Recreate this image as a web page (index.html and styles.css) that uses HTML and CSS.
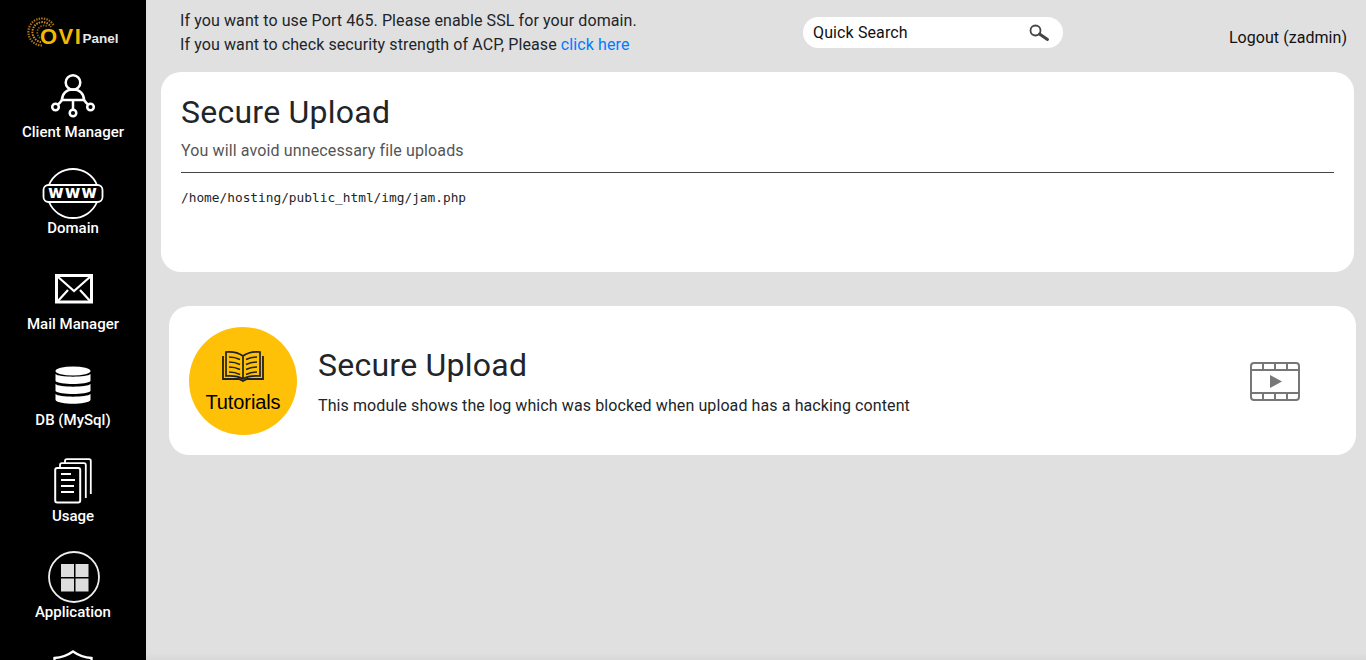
FILE: index.html
```html
<!DOCTYPE html>
<html lang="en">
<head>
<meta charset="utf-8">
<title>Secure Upload</title>
<link rel="stylesheet" href="styles.css">
</head>
<body>
<div class="app">
  <nav class="sidebar">
    <div class="logo">
      <svg class="logo-mark" width="30" height="30" viewBox="0 0 30 30" fill="none" stroke-dasharray="1.500 1.100">
        <path d="M15 28.500A13.500 13.500 0 1 1 27 9" stroke="#a86f16" stroke-width="2.200"/>
        <path d="M14 25A10 10 0 1 1 24 10" stroke="#c98a1c" stroke-width="2"/>
        <path d="M13 21A7 7 0 0 1 20 9" stroke="#7d5310" stroke-width="1.800"/>
      </svg>
      <span class="logo-ovi">OVI</span><span class="logo-panel">Panel</span>
    </div>
    <a class="nav-item">
      <svg class="nav-icon gap-0" width="48" height="48" viewBox="0 0 48 48" fill="none" stroke="#fff" stroke-width="2.500">
        <circle cx="24" cy="9.500" r="7.300"/>
        <path d="M13 27c0-6.500 4.500-10.500 11-10.500S35 20.500 35 27z"/>
        <path d="M24 27v9.500M13 27c-1.500 2-2.500 3.500-4 4.500M35 27c1.500 2 2.500 3.500 4 4.500"/>
        <circle cx="6.500" cy="34" r="3.300"/><circle cx="24" cy="40" r="3.300"/><circle cx="41.500" cy="34" r="3.300"/>
      </svg>
      <span>Client Manager</span>
    </a>
    <a class="nav-item">
      <svg class="nav-icon gap-over" width="62" height="54" viewBox="0 0 62 54" fill="none" stroke="#fff" stroke-width="1.800">
        <path d="M7 20A26 26 0 0 1 55 20M7 37A26 26 0 0 0 55 37"/>
        <rect x="1.500" y="20" width="59" height="17" rx="5"/>
        <text class="www" x="31" y="33" text-anchor="middle">www</text>
      </svg>
      <span>Domain</span>
    </a>
    <a class="nav-item">
      <svg class="nav-icon gap-mail shift" width="38" height="30" viewBox="0 0 38 30" fill="none" stroke="#fff" stroke-width="3">
        <rect x="1.500" y="1.500" width="35" height="26.500"/>
        <path d="M2 2l17 15L36 2M2 28l11-12M36 28L25 16" stroke-width="2.200"/>
      </svg>
      <span>Mail Manager</span>
    </a>
    <a class="nav-item">
      <svg class="nav-icon gap-db" width="36" height="38" viewBox="0 0 36 38" fill="#fff">
        <ellipse cx="18" cy="5" rx="17.500" ry="4.500"/>
        <path d="M.5 8c3 3.500 32 3.500 35 0v7c-3 4-32 4-35 0zM.5 18c3 3.500 32 3.500 35 0v7c-3 4-32 4-35 0zM.5 28c3 3.500 32 3.500 35 0v6c-3 5-32 5-35 0z"/>
      </svg>
      <span>DB (MySql)</span>
    </a>
    <a class="nav-item">
      <svg class="nav-icon gap-1" width="38" height="46" viewBox="0 0 38 46" fill="none" stroke="#fff" stroke-width="1.800">
        <path d="M11 5V3c0-1 .8-1.800 1.800-1.800H35c1 0 1.800.8 1.800 1.800v33"/>
        <path d="M6 9V7c0-1 .8-1.800 1.800-1.800H30c1 0 1.800.8 1.800 1.800v33"/>
        <rect x="1.200" y="10" width="25" height="34.500" rx="2" fill="#000" stroke-width="2"/>
        <path d="M7 16h10M7 22h14M7 28h13M7 34h13" stroke-width="1.800"/>
      </svg>
      <span>Usage</span>
    </a>
    <a class="nav-item">
      <svg class="nav-icon gap-over shift" width="52" height="52" viewBox="0 0 52 52">
        <circle cx="26" cy="26" r="25" fill="none" stroke="#eee" stroke-width="1.800"/>
        <rect x="13" y="13" width="13" height="13" fill="#ddd"/><rect x="27.500" y="13" width="13" height="13" fill="#ddd"/>
        <rect x="13" y="27.500" width="13" height="13" fill="#ddd"/><rect x="27.500" y="27.500" width="13" height="13" fill="#ddd"/>
      </svg>
      <span>Application</span>
    </a>
    <a class="nav-item">
      <svg class="nav-icon gap-shield" width="40" height="46" viewBox="0 0 40 46" fill="none" stroke="#fff" stroke-width="2.400">
        <path d="M1.500 8C9 7.500 15 5 20 1.500 25 5 31 7.500 38.500 8v16c0 10-8 16-18.500 20C9.500 40 1.500 34 1.500 24z"/>
      </svg>
    </a>
  </nav>

  <div class="main">
    <header class="topbar">
      <div class="notice">
        <p>If you want to use Port 465. Please enable SSL for your domain.</p>
        <p>If you want to check security strength of ACP, Please <a class="link">click here</a></p>
      </div>
      <div class="search">
        <span>Quick Search</span>
        <svg width="22" height="18" viewBox="0 0 22 18" fill="none" stroke="#444">
          <circle cx="7.500" cy="6.500" r="5" stroke-width="1.800"/>
          <path d="M11.500 10l8 5.500" stroke-width="3" stroke-linecap="round"/>
        </svg>
      </div>
      <div class="logout">Logout (zadmin)</div>
    </header>

    <section class="card upload">
      <h1>Secure Upload</h1>
      <p class="sub">You will avoid unnecessary file uploads</p>
      <hr>
      <pre>/home/hosting/public_html/img/jam.php</pre>
    </section>

    <section class="card tutorial">
      <div class="badge">
        <svg width="44" height="32" viewBox="0 0 44 32" fill="none" stroke="#222" stroke-width="1.500">
          <path d="M22 6C18 3 11 1.500 5 2v24c6-.5 13 .5 17 3 4-2.500 11-3.500 17-3V2c-6-.5-13 1-17 4zM22 6v23" stroke-width="1.700"/>
          <path d="M2 6v23h16l4 2 4-2h16V6" stroke-width="1.800"/>
          <path d="M8 7c4 0 8 1 11 2.500M8 12c4 0 8 1 11 2.500M8 17c4 0 8 1 11 2.500M8 22c4 0 8 1 11 2.500M36 7c-4 0-8 1-11 2.500M36 12c-4 0-8 1-11 2.500M36 17c-4 0-8 1-11 2.500M36 22c-4 0-8 1-11 2.500"/>
        </svg>
        <span>Tutorials</span>
      </div>
      <div class="tut-text">
        <h2>Secure Upload</h2>
        <p>This module shows the log which was blocked when upload has a hacking content</p>
      </div>
      <svg class="video" width="50" height="40" viewBox="0 0 50 40" fill="none" stroke="#777" stroke-width="2">
        <rect x="1" y="1" width="48" height="37" rx="3"/>
        <path d="M1 8h48M1 31h48M13 1v7M25 1v7M37 1v7M13 31v7M25 31v7M37 31v7"/>
        <path d="M20 13l12 6.500-12 6.500z" fill="#777" stroke="none"/>
      </svg>
    </section>
  </div>
</div>
</body>
</html>
```
FILE: styles.css
```css
* { box-sizing: border-box; }
html, body { margin: 0; height: 100%; overflow: hidden; }
body { font-family: Roboto, "Liberation Sans", sans-serif; background: #e0e0e0; color: #212529; font-size: 16px; }
.app { display: flex; height: 660px; }

.sidebar { width: 146px; height: 660px; flex: none; background: #000; color: #fff; overflow: hidden; }
.logo { height: 76px; padding: 26px 0 0 40px; display: flex; align-items: flex-start; position: relative; }
.logo-mark { position: absolute; left: 27px; top: 17px; }
.logo-ovi { position: relative; color: #f5b800; font: 700 22px/1 "Liberation Sans", sans-serif; letter-spacing: 1.500px; }
.logo-panel { position: relative; margin: 6px 0 0 0; color: #e8e8e8; font: 700 13.500px/1 "Liberation Sans", sans-serif; }
.nav-item { display: flex; flex-direction: column; align-items: center; justify-content: flex-end; flex: none; height: 96px; font-size: 15px; font-weight: 500; line-height: 20px; padding-bottom: 12px; text-align: center; }
.nav-item span { display: block; }
.logo + .nav-item { height: 78px; }
.nav-icon { flex: none; }
.shift { margin-left: 1px; }
.gap-0 { margin-bottom: 1px; }
.gap-1 { margin-bottom: 2px; }
.gap-over { margin-bottom: -1px; }
.gap-mail { margin-bottom: 10px; }
.gap-db { margin-bottom: 6px; }
.gap-shield { margin-bottom: 22px; }
.www { font: 700 17px "DejaVu Sans", sans-serif; letter-spacing: 1px; fill: #fff; stroke: none; }

.main { flex: 1; min-width: 0; height: 660px; padding-left: 15px; background: linear-gradient(to bottom, #e0e0e0 0, #e0e0e0 653px, #d8d8d8 660px); }
.topbar { height: 72px; display: flex; position: relative; }
.notice { margin-left: 19px; padding-top: 9px; letter-spacing: .1px; }
.notice p { margin: 0; line-height: 24px; }
.link { color: #007bff; }
.search { position: absolute; left: 642px; top: 17px; width: 260px; height: 31px; border-radius: 16px; background: #fff; display: flex; align-items: center; justify-content: space-between; padding: 0 13px 0 10px; color: #111; letter-spacing: .12px; }
.logout { position: absolute; right: 19px; top: 28px; line-height: 19px; color: #111; letter-spacing: .05px; }

.card { background: #fff; border-radius: 20px; }
.upload { width: 1193px; height: 200px; padding: 21px 20px 0; }
h1, h2 { margin: 0; font-weight: 400; font-size: 32px; line-height: 38px; letter-spacing: .25px; }
.sub { margin: 8px 0 0; line-height: 24px; color: #555; letter-spacing: .13px; }
.upload hr { margin: 9px 0 0; border: 0; border-top: 1px solid #444; }
pre { margin: 17px 0 0; font: 12.800px/15px "DejaVu Sans Mono", monospace; color: #212529; }

.tutorial { margin: 34px 0 0 8px; width: 1187px; height: 149px; padding: 21px 56px 0 20px; display: flex; align-items: flex-start; }
.badge { width: 108px; height: 108px; border-radius: 50%; background: #ffc107; flex: none; display: flex; flex-direction: column; align-items: center; padding-top: 23px; color: #000; }
.badge span { font: 400 20px/24px "Liberation Sans", sans-serif; margin-top: 8px; letter-spacing: -.1px; }
.tut-text { flex: 1; margin-left: 21px; padding-top: 19px; }
.tut-text p { margin: 10px 0 0; line-height: 24px; letter-spacing: .1px; }
.video { margin-top: 35px; flex: none; }
```
